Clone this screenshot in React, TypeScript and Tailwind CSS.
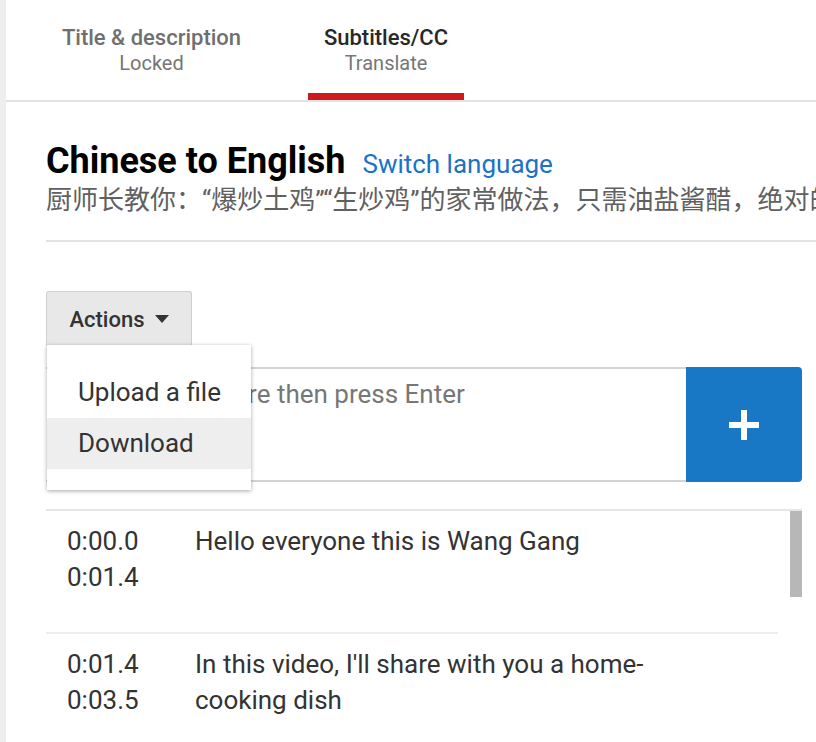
const font = { fontFamily: "Roboto, 'Noto Sans CJK SC', sans-serif" }

const rows = [
  { start: "0:00.0", end: "0:01.4", text: "Hello everyone this is Wang Gang" },
  { start: "0:01.4", end: "0:03.5", text: "In this video, I'll share with you a home-cooking dish" },
]

export default function App() {
  return (
    <div className="flex h-[742px] w-[816px] overflow-hidden bg-white" style={font}>
      <div className="w-[6px] shrink-0 bg-[#eeeeee]" />
      <div className="flex min-w-0 flex-1 flex-col">
        {/* tabs */}
        <div className="flex h-[102px] shrink-0 items-stretch border-b-2 border-[#e3e3e3]">
          <div className="ml-[40px] flex w-[211px] flex-col items-center pt-[24px]">
            <span className="text-[22px] leading-[28px] font-medium text-[#6f6f6f]">Title &amp; description</span>
            <span className="text-[20px] leading-[22px] text-[#767676]">Locked</span>
          </div>
          <div className="ml-[51px] flex w-[156px] flex-col items-center border-b-[7px] border-[#cc1a1f] pt-[24px]">
            <span className="text-[22px] leading-[28px] font-medium text-[#282828]">Subtitles/CC</span>
            <span className="text-[20px] leading-[22px] text-[#767676]">Translate</span>
          </div>
        </div>

        <div className="flex flex-col pl-[40px]">
          {/* heading */}
          <div className="mt-[39px] flex items-baseline gap-[17px]">
            <h1 className="text-[36px] leading-[40px] font-bold text-black">Chinese to English</h1>
            <span className="text-[26px] text-[#1a73c6]">Switch language</span>
          </div>
          <div className="overflow-hidden whitespace-nowrap text-[26px] leading-[32px] text-[#606060]">
            厨师长教你：“爆炒土鸡”“生炒鸡”的家常做法，只需油盐酱醋，绝对的美味下饭
          </div>
          <div className="mt-[24px] h-[2px] bg-[#e3e3e3]" />

          {/* actions */}
          <div className="relative mt-[49px]">
            <button className="flex h-[55px] w-[146px] items-center justify-center gap-[10px] rounded-t-[3px] border border-b-0 border-[#cfcfcf] bg-[#e8e8e8] text-[22px] font-medium text-[#333333]">
              Actions
              <svg width="14" height="8" viewBox="0 0 14 8">
                <path d="M0 0h14L7 8z" fill="#333333" />
              </svg>
            </button>

            <div className="absolute left-[1px] top-[54px] z-10 w-[204px] bg-white pb-[21px] pt-[22px] shadow-[0_1px_4px_rgba(0,0,0,0.35)]">
              <div className="flex h-[51px] items-center whitespace-nowrap px-[31px] text-[26px] text-[#333333]">Upload a file</div>
              <div className="flex h-[51px] items-center whitespace-nowrap bg-[#eeeeee] px-[31px] text-[26px] text-[#333333]">Download</div>
            </div>

            {/* input */}
            <div className="mr-[14px] mt-[21px] flex h-[115px]">
              <div className="flex-1 whitespace-nowrap border-y-2 border-[#d3d3d3] px-[20px] pt-[6px] text-[26px] text-[#777777]">
                Type subtitle here then press Enter
              </div>
              <button className="flex w-[116px] items-center justify-center rounded-r-[4px] bg-[#1878c6]">
                <svg width="30" height="30" viewBox="0 0 30 30">
                  <path d="M12 0h6v12h12v6H18v12h-6V18H0v-6h12z" fill="#ffffff" />
                </svg>
              </button>
            </div>
          </div>

          {/* subtitle list */}
          <div className="relative mr-[14px] mt-[27px] border-t-2 border-[#e6e6e6]">
            <div className="absolute right-0 top-0 h-[86px] w-[12px] bg-[#b7b7b7]" />
            <div className="mr-[24px]">
              {rows.map((r, i) => (
                <div key={i} className="flex min-h-[123px] border-b-2 border-[#eeeeee] pt-[12px] text-[26px] leading-[36px] text-[#333333]">
                  <div className="w-[149px] shrink-0 pl-[21px]">
                    <div>{r.start}</div>
                    <div>{r.end}</div>
                  </div>
                  <div className="w-[470px]">{r.text}</div>
                </div>
              ))}
            </div>
          </div>
        </div>
      </div>
    </div>
  )
}
